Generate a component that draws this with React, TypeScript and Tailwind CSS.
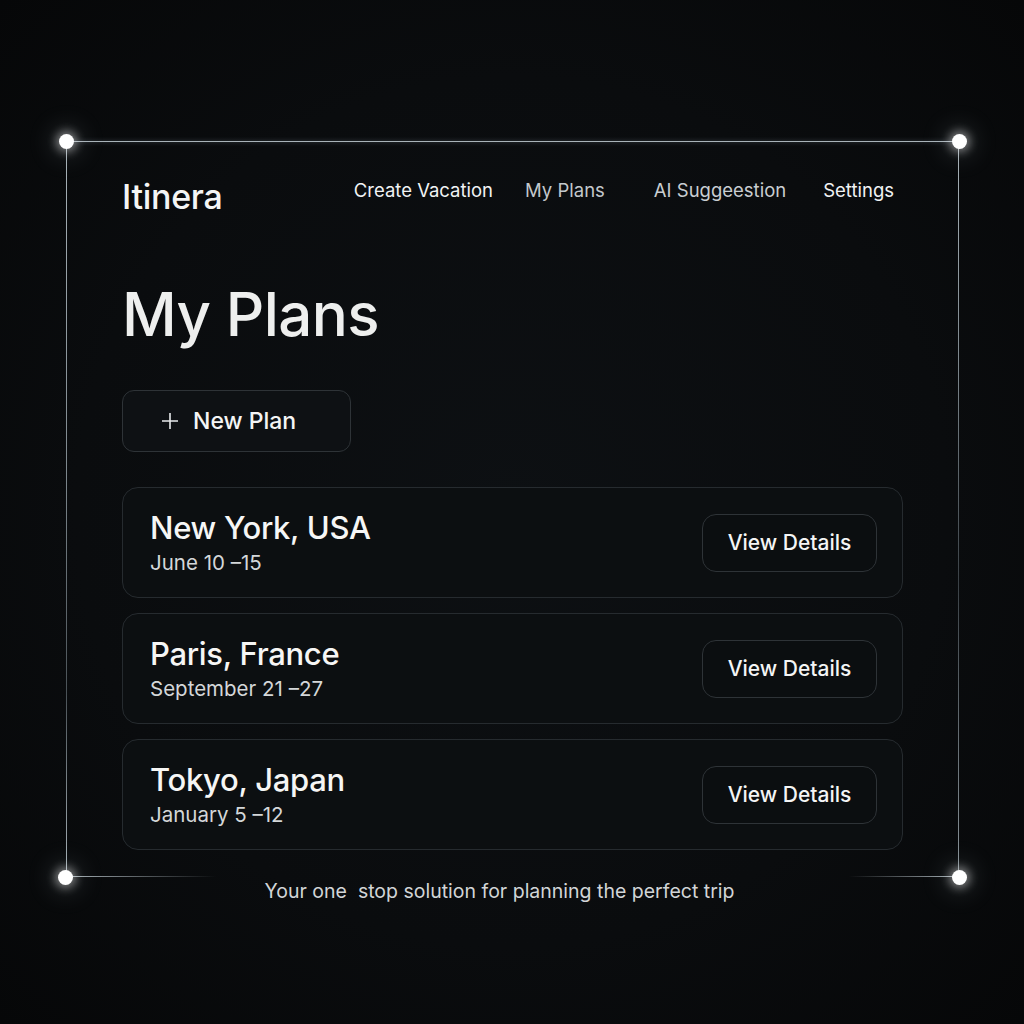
import React from 'react';

const NAV = [
  { label: 'Create Vacation', cls: 'text-[#f1f3f4]' },
  { label: 'My Plans', cls: 'text-[#c3c8cc] ml-[32px]' },
  { label: 'AI Suggeestion', cls: 'text-[#c9ced2] ml-[49px]' },
  { label: 'Settings', cls: 'text-[#f1f3f4] ml-[37px]' },
];

const PLANS = [
  { city: 'New York, USA', dates: 'June 10 –15' },
  { city: 'Paris, France', dates: 'September 21 –27' },
  { city: 'Tokyo, Japan', dates: 'January 5 –12' },
];

const Dot = ({ className }: { className: string }) => (
  <div
    className={
      'absolute w-[15px] h-[15px] rounded-full bg-white shadow-[0_0_10px_3px_rgba(255,255,255,0.45),0_0_26px_8px_rgba(200,220,230,0.15)] ' +
      className
    }
  />
);

export default function App() {
  return (
    <div
      className="w-[1024px] h-[1024px] overflow-hidden bg-[#0a0c0e] bg-[radial-gradient(ellipse_at_center,#0d1013_0%,#0a0c0e_60%,#060708_100%)] pt-[141px] pl-[66px]"
      style={{ fontFamily: 'Inter, "Noto Sans", sans-serif' }}
    >
      <div className="relative w-[893px] h-[736px] px-[56px] flex flex-col">
        {/* frame */}
        <div className="absolute left-0 right-0 top-0 h-px bg-[#a9b3b9] shadow-[0_0_4px_rgba(180,200,210,0.5)]" />
        <div className="absolute left-0 top-0 bottom-0 w-px bg-[linear-gradient(to_bottom,#a9b3b9_0%,#7d878d_45%,#4a5257_75%,#a9b3b9_100%)]" />
        <div className="absolute right-0 top-0 bottom-0 w-px bg-[linear-gradient(to_bottom,#a9b3b9_0%,#7d878d_30%,#3a4146_60%,#8a949a_100%)]" />
        <div className="absolute left-0 bottom-0 w-[150px] h-px bg-[linear-gradient(to_right,#a9b3b9,rgba(120,130,136,0))]" />
        <div className="absolute right-0 bottom-0 w-[110px] h-px bg-[linear-gradient(to_left,#a9b3b9,rgba(120,130,136,0))]" />
        <Dot className="-left-[7px] -top-[7px]" />
        <Dot className="-right-[8px] -top-[7px]" />
        <Dot className="-left-[8px] -bottom-[8px]" />
        <Dot className="-right-[8px] -bottom-[8px]" />

        <header className="flex items-center justify-between pt-[30px] pr-[9px]">
          <div className="text-[34px] font-medium tracking-[-0.3px] text-[#f4f5f5]">Itinera</div>
          <nav className="flex items-center text-[18.5px] mt-[-12px]">
            {NAV.map((n) => (
              <span key={n.label} className={n.cls}>
                {n.label}
              </span>
            ))}
          </nav>
        </header>

        <h1 className="mt-[62px] text-[60px] leading-none font-medium tracking-[-0.6px] text-[#eeefee]">My Plans</h1>

        <button className="mt-[46px] w-[229px] h-[62px] rounded-[12px] border border-[#2e3337] bg-[#0e1114] flex items-center gap-[14px] pl-[38px] text-[23px] font-medium text-[#f4f5f5]">
          <svg width="18" height="18" viewBox="0 0 18 18" fill="none" stroke="#e8eaeb" strokeWidth="1.6">
            <path d="M9 1v16M1 9h16" />
          </svg>
          New Plan
        </button>

        <div className="mt-[35px] flex flex-col gap-[15px]">
          {PLANS.map((p) => (
            <div
              key={p.city}
              className="h-[111px] rounded-[16px] border border-[#262b2f] bg-[#0c0f11] flex items-center justify-between pl-[27px] pr-[25px]"
            >
              <div className="flex flex-col">
                <span className="text-[31px] font-medium tracking-[-0.3px] leading-[36px] text-[#f6f6f5]">{p.city}</span>
                <span className="mt-[4px] text-[20.5px] leading-[26px] text-[#d4d7d9]">{p.dates}</span>
              </div>
              <button className="w-[175px] h-[58px] rounded-[14px] border border-[#2e3337] bg-[#0b0e10] text-[21px] font-medium text-[#f4f5f5]">
                View Details
              </button>
            </div>
          ))}
        </div>
      </div>
      <p className="w-[893px] text-center text-[19.5px] text-[#d2d5d7] pr-[26px]">
        Your one&nbsp; stop solution for planning the perfect trip
      </p>
    </div>
  );
}
